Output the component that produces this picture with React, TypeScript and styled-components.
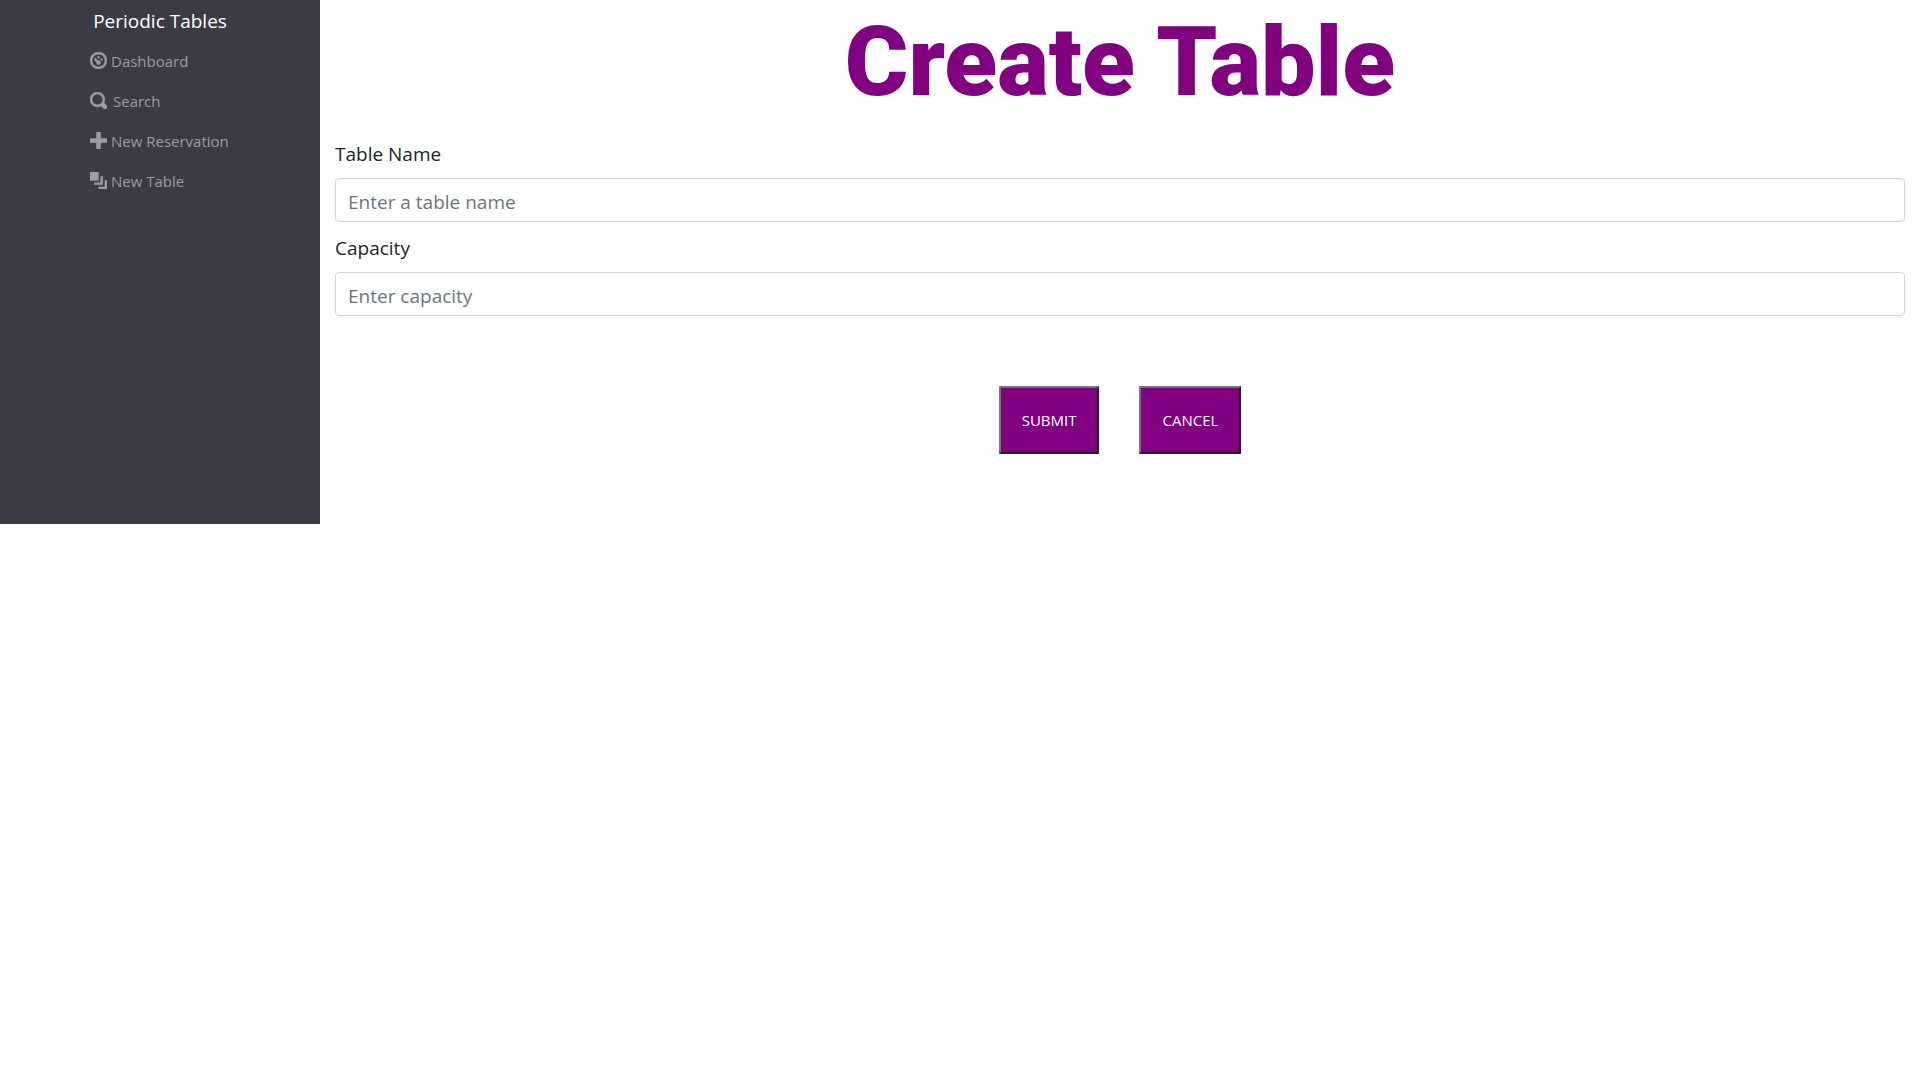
import React from "react";
import styled, { createGlobalStyle } from "styled-components";

const GlobalStyle = createGlobalStyle`
  *, *::before, *::after { box-sizing: border-box; }
  body {
    margin: 0;
    background: #fff;
    color: #212529;
    font-family: "Segoe UI", "Open Sans", "Noto Sans", sans-serif;
    font-size: 16px;
    line-height: 24px;
  }
`;

const Layout = styled.div`
  display: grid;
  grid-template-columns: 1fr 5fr;
  align-items: start;
`;

const Sidebar = styled.nav`
  display: flex;
  flex-direction: column;
  align-items: center;
  min-height: 524px;
  background: #3c3a44;
`;

const Brand = styled.a`
  padding: 7px 0 6px;
  color: #fff;
  font-size: 19px;
  line-height: 28px;
  text-decoration: none;
`;

const Menu = styled.ul`
  width: 140px;
  margin: 0;
  padding: 0;
  list-style: none;
`;

const MenuLink = styled.a<{ $gap?: number }>`
  display: flex;
  align-items: center;
  gap: ${({ $gap = 4 }) => $gap}px;
  padding: 8px 0;
  color: #9d9ca1;
  font-size: 15px;
  line-height: 24px;
  text-decoration: none;
  white-space: nowrap;
`;

const Icon = styled.svg`
  flex: none;
  width: 17px;
  height: 17px;
  margin-bottom: 2px;
  fill: currentColor;
  stroke: currentColor;
  stroke-width: 0.2;
`;

const Main = styled.main`
  padding: 0 15px;
`;

const Title = styled.h1`
  margin: 0;
  color: purple;
  font-family: Roboto, sans-serif;
  font-size: 97px;
  font-weight: 900;
  line-height: 124px;
  text-align: center;
`;

const Form = styled.form`
  padding-top: 12px;
`;

const Field = styled.div`
  margin-bottom: 8px;
`;

const Label = styled.label`
  display: block;
  margin-bottom: 8px;
  padding-top: 2px;
  font-size: 19px;
  line-height: 32px;
`;

const Input = styled.input`
  display: block;
  width: 100%;
  height: 44px;
  padding: 8px 12px 4px;
  border: 1px solid #ced4da;
  border-radius: 4px;
  background: #fff;
  color: #495057;
  font: inherit;
  font-size: 19px;

  &::placeholder {
    color: #6c757d;
    opacity: 1;
  }
`;

const Actions = styled.div`
  display: flex;
  justify-content: center;
  gap: 40px;
  padding-top: 62px;
`;

const Button = styled.button`
  height: 68px;
  padding: 0 21px;
  border: 2px solid;
  border-color: #767676 #212121 #212121 #767676;
  border-radius: 0;
  background: purple;
  color: #fff;
  font: inherit;
  font-size: 15px;
  text-transform: uppercase;
`;

const links = [
  {
    label: "Dashboard",
    icon: "M4 0c-2.2 0-4 1.8-4 4s1.8 4 4 4 4-1.8 4-4-1.8-4-4-4zm0 1c1.66 0 3 1.34 3 3s-1.34 3-3 3-3-1.34-3-3 1.34-3 3-3zm0 1c-.28 0-.5.22-.5.5s.22.5.5.5.5-.22.5-.5-.22-.5-.5-.5zm-1.66 1a.5.5 0 0 0-.19.84l.91.91c-.02.08-.06.16-.06.25 0 .55.45 1 1 1s1-.45 1-1-.45-1-1-1c-.09 0-.17.04-.25.06l-.91-.91a.5.5 0 0 0-.44-.16.5.5 0 0 0-.06 0zm3.16 0c-.28 0-.5.22-.5.5s.22.5.5.5.5-.22.5-.5-.22-.5-.5-.5z",
  },
  {
    label: "Search",
    icon: "M3.5 0c-1.93 0-3.5 1.57-3.5 3.5s1.57 3.5 3.5 3.5c.59 0 1.17-.14 1.66-.41a1 1 0 0 0 .13.13l1 1a1.02 1.02 0 1 0 1.44-1.44l-1-1a1 1 0 0 0-.16-.13c.27-.49.44-1.06.44-1.66 0-1.93-1.55-3.5-3.5-3.5zm0 1c1.39 0 2.5 1.11 2.5 2.5 0 .66-.24 1.27-.66 1.72a1 1 0 0 0-.13.13c-.45.4-1.05.66-1.72.66-1.39 0-2.5-1.11-2.5-2.5s1.11-2.5 2.5-2.5z",
    gap: 6,
  },
  { label: "New Reservation", icon: "M3 0v3h-3v2h3v3h2v-3h3v-2h-3v-3h-2z" },
  { label: "New Table", icon: "M0 0v4h4v-4h-4zm5 2v3h-3v1h4v-4h-1zm2 2v3h-3v1h4v-4h-1z" },
];

export default function App() {
  return (
    <>
      <GlobalStyle />
      <Layout>
        <Sidebar>
          <Brand href="#">Periodic Tables</Brand>
          <Menu>
            {links.map(({ label, icon, gap }) => (
              <li key={label}>
                <MenuLink href="#" $gap={gap}>
                  <Icon viewBox="0 0 8 8" aria-hidden="true">
                    <path d={icon} />
                  </Icon>
                  <span>{label}</span>
                </MenuLink>
              </li>
            ))}
          </Menu>
        </Sidebar>
        <Main>
          <Title>Create Table</Title>
          <Form onSubmit={(event) => event.preventDefault()}>
            <Field>
              <Label htmlFor="table_name">Table Name</Label>
              <Input id="table_name" name="table_name" type="text" placeholder="Enter a table name" />
            </Field>
            <Field>
              <Label htmlFor="capacity">Capacity</Label>
              <Input id="capacity" name="capacity" type="text" placeholder="Enter capacity" />
            </Field>
            <Actions>
              <Button type="submit">Submit</Button>
              <Button type="button">Cancel</Button>
            </Actions>
          </Form>
        </Main>
      </Layout>
    </>
  );
}
